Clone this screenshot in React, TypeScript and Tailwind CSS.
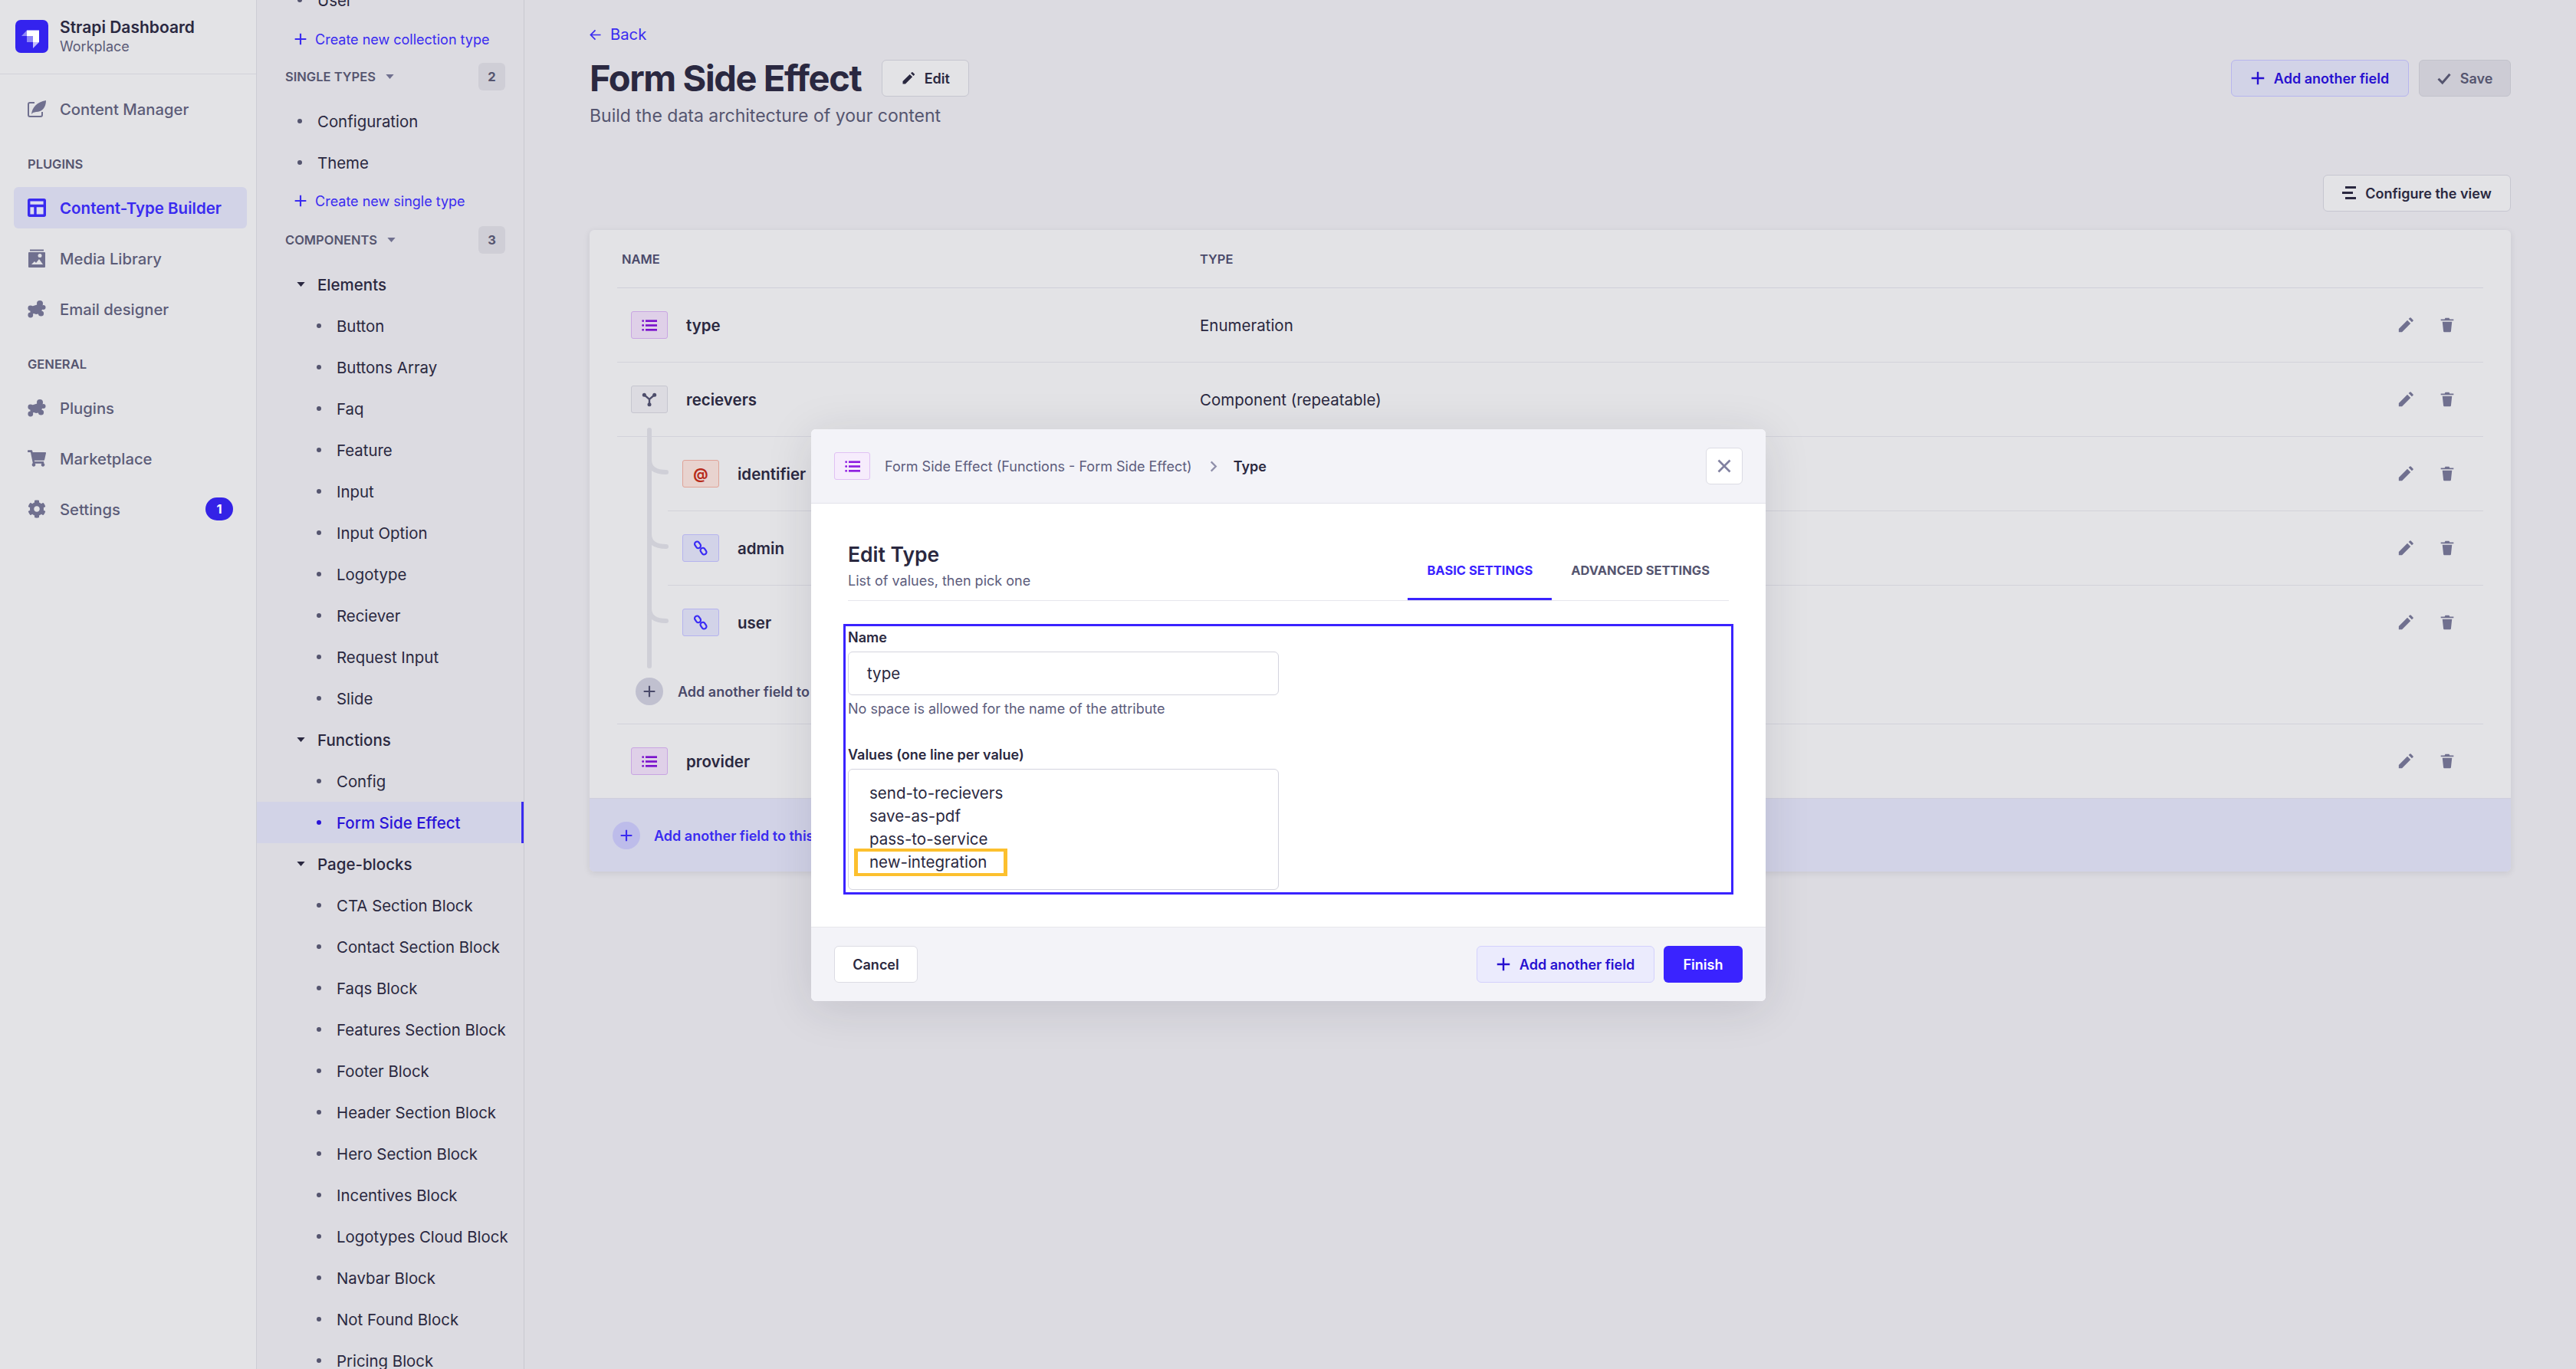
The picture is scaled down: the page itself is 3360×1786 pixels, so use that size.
import { FaCog, FaShoppingCart } from 'react-icons/fa';

function Plus({ className }: { className: string }) {
  return (
    <svg viewBox="0 0 24 24" className={className} fill="currentColor">
      <path d="M10.4 1h3.2v9.4H23v3.2h-9.4V23h-3.2v-9.4H1v-3.2h9.4z" />
    </svg>
  );
}

function Pencil({ className }: { className: string }) {
  return (
    <svg viewBox="0 0 24 24" className={className} fill="currentColor">
      <path d="M2 22v-4.6L14.2 5.2l4.6 4.6L6.6 22zM16 3.4l1.8-1.8a1 1 0 0 1 1.4 0l3.2 3.2a1 1 0 0 1 0 1.4L20.6 8z" />
    </svg>
  );
}

function Trash({ className }: { className: string }) {
  return (
    <svg viewBox="0 0 24 24" className={className} fill="currentColor">
      <path d="M9 1h6l1 2h6v2H2V3h6zM4.5 7h15l-1.600 15a1 1 0 0 1-1 1H7.100a1 1 0 0 1-1-1z" />
    </svg>
  );
}

function ListIcon({ className }: { className: string }) {
  return (
    <svg viewBox="0 0 24 20" className={className} fill="currentColor">
      <circle cx="2" cy="3" r="1.7" />
      <circle cx="2" cy="10" r="1.7" />
      <circle cx="2" cy="17" r="1.7" />
      <rect x="6" y="1.4" width="18" height="3.2" />
      <rect x="6" y="8.4" width="18" height="3.2" />
      <rect x="6" y="15.4" width="18" height="3.2" />
    </svg>
  );
}

function LinkIcon() {
  return (
    <svg viewBox="0 0 24 24" className="h-[20px] w-[20px] text-[#3a2bf5]" fill="none" stroke="currentColor" strokeWidth="2.6">
      <rect x="3.5" y="1.5" width="7.5" height="11" rx="3.7" transform="rotate(-35 7.2 7)" />
      <rect x="12.5" y="11.5" width="7.5" height="11" rx="3.7" transform="rotate(-35 16.2 17)" />
    </svg>
  );
}

function ComponentIcon() {
  return (
    <svg viewBox="0 0 24 24" className="h-[20px] w-[20px] text-[#4d4d6b]" fill="none" stroke="currentColor" strokeWidth="2.8">
      <path d="M4 5l8 7 8-7M12 12v8" />
      <circle cx="4" cy="5" r="3" fill="currentColor" stroke="none" />
      <circle cx="20" cy="5" r="3" fill="currentColor" stroke="none" />
      <circle cx="12" cy="20" r="3" fill="currentColor" stroke="none" />
    </svg>
  );
}

function Puzzle() {
  return (
    <svg viewBox="0 0 24 24" className="h-[24px] w-[24px]" fill="currentColor">
      <circle cx="16" cy="5" r="4" />
      <circle cx="3.800" cy="11" r="3.400" />
      <circle cx="3.800" cy="20" r="3.400" />
      <circle cx="17.500" cy="18" r="3.600" />
      <circle cx="20.500" cy="10" r="3" />
      <path d="M6 8.500L14 6l6 4-3 8-6 1-3-1-4 2-1-9z" />
    </svg>
  );
}

function Caret({ className }: { className: string }) {
  return (
    <svg viewBox="0 0 12 7" className={className} fill="currentColor">
      <path d="M0 0h12L6 7z" />
    </svg>
  );
}

function NavItem({ label, icon, active, badge }: { label: string; icon: React.ReactNode; active?: boolean; badge?: string }) {
  return (
    <div
      className={
        active
          ? 'flex h-[54px] items-center gap-[18px] rounded-[6px] bg-[#d2d3e7] pl-[18px] text-[20.5px] font-semibold text-[#3a2bf0]'
          : 'flex h-[54px] items-center gap-[18px] rounded-[6px] pl-[18px] text-[20.25px] font-medium text-[#5c5c78]'
      }
    >
      <span className="flex h-[24px] w-[24px] items-center justify-center text-[#70708f]">{icon}</span>
      <span className="pt-[2px]">{label}</span>
      {badge && (
        <span className="ml-auto mr-[18px] flex h-[30px] w-[36px] items-center justify-center rounded-full bg-[#3422e6] text-[16.5px] font-bold text-white">
          {badge}
        </span>
      )}
    </div>
  );
}

function SectionLabel({ children }: { children: string }) {
  return <div className="mb-[21px] mt-[36px] h-[18px] pl-[18px] text-[16.5px] font-semibold leading-[18px] text-[#55556f]">{children}</div>;
}

function Sidebar() {
  return (
    <aside className="h-full w-[335px] shrink-0 border-r border-[#cdcdd5] bg-[#e3e3e6]">
      <div className="flex h-[97px] items-center gap-[15px] border-b border-[#d2d2d9] pb-[2px] pl-[20px]">
        <svg viewBox="0 0 43 43" className="h-[43px] w-[43px]">
          <rect width="43" height="43" rx="7" fill="#3423ee" />
          <path d="M15 13.5h16V29h-8v-8h-8z" fill="#fff" />
          <path d="M15 13.5V21H8z" fill="#fff" fillOpacity="0.45" />
          <path d="M15 21h8v8h-8z" fill="#fff" fillOpacity="0.45" />
          <path d="M23 29h8l-8 8z" fill="#fff" fillOpacity="0.7" />
        </svg>
        <div>
          <div className="text-[21px] font-semibold leading-[27px] text-[#2a2840]">Strapi Dashboard</div>
          <div className="text-[18px] leading-[24px] text-[#5c5c78]">Workplace</div>
        </div>
      </div>
      <nav className="pl-[18px] pr-[12px] pt-[18px]">
        <NavItem
          label="Content Manager"
          icon={
            <svg viewBox="0 0 24 24" className="h-[24px] w-[24px]" fill="none" stroke="currentColor" strokeWidth="2">
              <path d="M9 4H3a2 2 0 0 0-2 2v14a2 2 0 0 0 2 2h14a2 2 0 0 0 2-2v-4" />
              <path d="M5 19c1-9 7-16 19-18 0 9-5 15-13 15l-4 1z" fill="currentColor" stroke="none" />
            </svg>
          }
        />
        <SectionLabel>PLUGINS</SectionLabel>
        <div className="flex flex-col gap-[12px]">
          <NavItem
            active
            label="Content-Type Builder"
            icon={
              <svg viewBox="0 0 24 24" className="h-[24px] w-[24px] text-[#3a2bf0]" fill="#dcdcf0" stroke="currentColor" strokeWidth="3.400">
                <rect x="1.700" y="1.700" width="20.600" height="20.600" rx="1" />
                <path d="M1.700 9.500h20.600M10 9.500v12.800" />
              </svg>
            }
          />
          <NavItem
            label="Media Library"
            icon={
              <svg viewBox="0 0 24 24" className="h-[24px] w-[24px]" fill="currentColor">
                <rect x="3" y="0.500" width="18" height="2" />
                <path d="M2 4h20a1 1 0 0 1 1 1v18a1 1 0 0 1-1 1H2a1 1 0 0 1-1-1V5a1 1 0 0 1 1-1zm3 16h15l-5-7-4 5-2-2zm11-9a2.500 2.500 0 1 0 0-5 2.500 2.500 0 0 0 0 5z" fillRule="evenodd" />
              </svg>
            }
          />
          <NavItem label="Email designer" icon={<Puzzle />} />
        </div>
        <SectionLabel>GENERAL</SectionLabel>
        <div className="flex flex-col gap-[12px]">
          <NavItem label="Plugins" icon={<Puzzle />} />
          <NavItem label="Marketplace" icon={<FaShoppingCart className="h-[24px] w-[24px]" />} />
          <NavItem label="Settings" badge="1" icon={<FaCog className="h-[24px] w-[24px]" />} />
        </div>
      </nav>
    </aside>
  );
}

function Leaf({ label, nested, active }: { label: string; nested?: boolean; active?: boolean }) {
  return (
    <div
      className={
        (nested ? 'pl-[78px] ' : 'pl-[53px] ') +
        (active
          ? 'relative flex h-[54px] items-center gap-[20px] bg-[#d2d3e7] text-[20.5px] font-medium text-[#2a14d8]'
          : 'flex h-[54px] items-center gap-[20px] text-[20.4px] text-[#2a2840]')
      }
    >
      <span className={active ? 'h-[6px] w-[6px] rounded-full bg-[#2a14d8]' : 'h-[6px] w-[6px] rounded-full bg-[#55556f]'} />
      <span className="whitespace-nowrap pt-[2px]">{label}</span>
      {active && <span className="absolute right-0 top-0 h-full w-[3px] bg-[#3a2bf0]" />}
    </div>
  );
}

function Group({ label }: { label: string }) {
  return (
    <div className="flex h-[54px] items-center gap-[16px] pl-[52px] text-[20.5px] font-medium text-[#2a2840]">
      <Caret className="h-[6px] w-[11px] text-[#2a2840]" />
      <span className="pt-[2px]">{label}</span>
    </div>
  );
}

function CreateLink({ label, className }: { label: string; className: string }) {
  return (
    <div className={'flex items-center gap-[11px] pl-[49px] text-[18px] text-[#3a2bf0] ' + className}>
      <Plus className="h-[16px] w-[16px]" />
      <span>{label}</span>
    </div>
  );
}

function ListHeader({ label, count, className }: { label: string; count: string; className: string }) {
  return (
    <div className={'flex items-center pl-[37px] pr-[24px] ' + className}>
      <span className="text-[16.5px] font-semibold text-[#55556f]">{label}</span>
      <Caret className="ml-[13px] h-[6px] w-[11px] text-[#70708f]" />
      <span className="ml-auto flex h-[36px] w-[35px] items-center justify-center rounded-[6px] bg-[#cfced6] text-[16.5px] font-bold text-[#55556f]">{count}</span>
    </div>
  );
}

function SecondaryNav() {
  const elements = ['Button', 'Buttons Array', 'Faq', 'Feature', 'Input', 'Input Option', 'Logotype', 'Reciever', 'Request Input', 'Slide'];
  const blocks = [
    'CTA Section Block',
    'Contact Section Block',
    'Faqs Block',
    'Features Section Block',
    'Footer Block',
    'Header Section Block',
    'Hero Section Block',
    'Incentives Block',
    'Logotypes Cloud Block',
    'Navbar Block',
    'Not Found Block',
    'Pricing Block',
  ];
  return (
    <div className="h-full w-[349px] shrink-0 overflow-hidden border-r border-[#c8c8d0] bg-[#dcdbe1]">
      <div className="-mt-[27px]">
        <Leaf label="User" />
        <CreateLink label="Create new collection type" className="h-[48px]" />
        <ListHeader label="SINGLE TYPES" count="2" className="mb-[6px] h-[50px]" />
        <Leaf label="Configuration" />
        <Leaf label="Theme" />
        <CreateLink label="Create new single type" className="h-[46px]" />
        <ListHeader label="COMPONENTS" count="3" className="mb-[3px] h-[56px]" />
        <Group label="Elements" />
        {elements.map((item) => (
          <Leaf key={item} label={item} nested />
        ))}
        <Group label="Functions" />
        <Leaf label="Config" nested />
        <Leaf label="Form Side Effect" nested active />
        <Group label="Page-blocks" />
        {blocks.map((item) => (
          <Leaf key={item} label={item} nested />
        ))}
      </div>
    </div>
  );
}

const boxStyles = {
  list: 'border-[#c9a5e2] bg-[#dfd0e8] text-[#7b12cc]',
  component: 'border-[#c6c6cf] bg-[#dcdbe1]',
  email: 'border-[#dfa398] bg-[#e8d3cf] text-[#b72b1a]',
  relation: 'border-[#b5b3ee] bg-[#d2d3e8]',
};

function TypeBox({ kind }: { kind: keyof typeof boxStyles }) {
  return (
    <span className={'flex h-[36px] w-[48px] shrink-0 items-center justify-center rounded-[3px] border ' + boxStyles[kind]}>
      {kind === 'list' && <ListIcon className="h-[17px] w-[20px]" />}
      {kind === 'component' && <ComponentIcon />}
      {kind === 'email' && <span className="text-[19px] font-bold leading-none">@</span>}
      {kind === 'relation' && <LinkIcon />}
    </span>
  );
}

function FieldRow({ name, type, kind, nested, noBorder }: { name: string; type?: string; kind: keyof typeof boxStyles; nested?: boolean; noBorder?: boolean }) {
  return (
    <div className={(nested ? 'ml-[66px] ' : '') + (noBorder ? 'h-[96px] ' : 'h-[97px] border-b border-[#d2d2da] ') + 'flex items-center'}>
      <div className={nested ? 'flex w-[694px] items-center gap-[24px] pl-[19px]' : 'flex w-[760px] items-center gap-[24px] pl-[18px]'}>
        <TypeBox kind={kind} />
        <span className="pt-[2px] text-[20.5px] font-semibold text-[#2a2840]">{name}</span>
      </div>
      <span className="pt-[2px] text-[20.5px] text-[#2a2840]">{type}</span>
      <div className="ml-auto flex items-center gap-[33px] pr-[37px] text-[#70708f]">
        <Pencil className="h-[22px] w-[22px]" />
        <Trash className="h-[20px] w-[20px]" />
      </div>
    </div>
  );
}

function FieldTable() {
  return (
    <div className="mt-[24px] h-[837px] overflow-hidden rounded-[6px] bg-[#e3e3e6] shadow-[0_2px_8px_rgba(33,33,52,0.1)]">
      <div className="px-[36px]">
        <div className="flex h-[76px] items-center border-b border-[#cfcfd9] pl-[6px] pt-[2px] text-[16.5px] font-semibold text-[#4a4a6a]">
          <span className="w-[754px]">NAME</span>
          <span>TYPE</span>
        </div>
        <FieldRow name="type" type="Enumeration" kind="list" />
        <FieldRow name="recievers" type="Component (repeatable)" kind="component" />
        <div className="relative border-b border-[#d2d2da]">
          <svg className="absolute -top-[14px] left-[36px] h-[320px] w-[36px] text-[#cfcfd7]" viewBox="0 0 36 320" fill="none" stroke="currentColor" strokeWidth="6" strokeLinecap="round">
            <path d="M6 5v308" />
            <path d="M6 44q0 16 22 16M6 141q0 16 22 16M6 238q0 16 22 16" />
          </svg>
          <FieldRow name="identifier" kind="email" nested />
          <FieldRow name="admin" kind="relation" nested />
          <FieldRow name="user" kind="relation" nested noBorder />
          <div className="flex h-[84px] items-center gap-[19px] pl-[24px] text-[18px] font-semibold text-[#4a4a6a]">
            <span className="flex h-[36px] w-[36px] items-center justify-center rounded-full bg-[#c0c0cf]">
              <Plus className="h-[16px] w-[16px]" />
            </span>
            <span>Add another field to this component</span>
          </div>
        </div>
        <FieldRow name="provider" kind="list" noBorder />
      </div>
      <div className="flex h-[97px] items-center gap-[18px] border-t border-[#cfcfdc] bg-[#d2d3e7] pl-[30px] text-[18px] font-semibold text-[#3a2bf0]">
        <span className="flex h-[36px] w-[36px] items-center justify-center rounded-full bg-[#bdbcea]">
          <Plus className="h-[16px] w-[16px]" />
        </span>
        <span>Add another field to this collection type</span>
      </div>
    </div>
  );
}

function EditModal() {
  return (
    <div className="absolute left-[1058px] top-[560px] w-[1245px] overflow-hidden rounded-[6px] bg-white shadow-[0_8px_60px_rgba(33,33,52,0.13)]">
      <div className="flex h-[97px] items-center border-b border-[#e3e3ea] bg-[#f3f3f8] pl-[30px] pr-[30px]">
        <span className="flex h-[36px] w-[47px] items-center justify-center rounded-[3px] border border-[#e0c1f4] bg-[#f6ecfc] text-[#8f1fe0]">
          <ListIcon className="h-[17px] w-[20px]" />
        </span>
        <span className="ml-[19px] text-[18px] text-[#5c5c7c]">Form Side Effect (Functions - Form Side Effect)</span>
        <svg viewBox="0 0 10 16" className="ml-[23px] h-[15px] w-[10px] text-[#8e8ea9]" fill="none" stroke="currentColor" strokeWidth="2.4">
          <path d="M1.500 1.500L8 8l-6.500 6.500" />
        </svg>
        <span className="ml-[21px] text-[18px] font-semibold text-[#2a2840]">Type</span>
        <span className="ml-auto flex h-[48px] w-[48px] items-center justify-center rounded-[6px] border border-[#dcdce4] bg-white text-[#8080a0]">
          <svg viewBox="0 0 24 24" className="h-[20px] w-[20px]" fill="none" stroke="currentColor" strokeWidth="3.200">
            <path d="M3 3l18 18M21 3L3 21" />
          </svg>
        </span>
      </div>

      <div className="mx-[48px] flex h-[127px] items-end justify-between border-b border-[#e6e6ec]">
        <div className="self-start pt-[48px]">
          <div className="text-[26.5px] font-semibold leading-[36px] text-[#2a2840]">Edit Type</div>
          <div className="mt-[3px] text-[18px] leading-[27px] text-[#5c5c7c]">List of values, then pick one</div>
        </div>
        <div className="flex text-[16.5px] font-bold leading-[24px]">
          <span className="border-b-[3px] border-[#3a23ff] px-[25px] pb-[24px] text-[#3a23ff]">BASIC SETTINGS</span>
          <span className="px-[25px] pb-[27px] text-[#55556f]">ADVANCED SETTINGS</span>
        </div>
      </div>

      <div className="mx-[42px] mb-[42px] mt-[30px] border-[3px] border-[#3a23ff] px-[3px] pb-[3px] pt-[4px]">
        <div className="text-[18px] font-semibold leading-[22px] text-[#2a2840]">Name</div>
        <div className="mt-[7px] flex h-[57px] w-[562px] items-center rounded-[6px] border border-[#d4d4de] pl-[24px] pt-[2px] text-[20.5px] text-[#2a2840]">type</div>
        <div className="mt-[6px] text-[18px] leading-[24px] text-[#5c5c7c]">No space is allowed for the name of the attribute</div>
        <div className="mt-[37px] text-[18px] font-semibold leading-[22px] text-[#2a2840]">Values (one line per value)</div>
        <div className="relative mt-[7px] h-[158px] w-[562px] rounded-[6px] border border-[#d4d4de] pl-[27px] pt-[16px] text-[20.5px] leading-[30px] text-[#2a2840]">
          <div>send-to-recievers</div>
          <div>save-as-pdf</div>
          <div>pass-to-service</div>
          <div>new-integration</div>
          <span className="absolute left-[7px] top-[103px] h-[36px] w-[200px] border-x-[5px] border-y-[4px] border-[#fcc02e]" />
        </div>
      </div>

      <div className="flex h-[97px] items-center justify-between border-t border-[#e6e6ec] bg-[#f3f3f8] px-[30px] text-[18px] font-semibold">
        <span className="flex h-[48px] w-[109px] items-center justify-center rounded-[6px] border border-[#dcdce4] bg-white text-[#2a2840]">Cancel</span>
        <div className="flex gap-[12px]">
          <span className="flex h-[48px] w-[232px] items-center justify-center gap-[12px] rounded-[6px] border border-[#d3d1fd] bg-[#ebebfd] text-[#2710d0]">
            <Plus className="h-[18px] w-[18px]" />
            Add another field
          </span>
          <span className="flex h-[48px] w-[103px] items-center justify-center rounded-[6px] bg-[#3a23ff] text-white">Finish</span>
        </div>
      </div>
    </div>
  );
}

export default function App() {
  return (
    <div className="relative flex h-[1786px] w-[3360px] overflow-hidden [font-family:Inter,sans-serif]">
      <Sidebar />
      <SecondaryNav />
      <main className="min-w-0 flex-1 bg-[#dcdbe1] px-[85px] pt-[32px]">
        <div className="flex h-[27px] items-center gap-[12px] text-[20.25px] text-[#3a2bf0]">
          <svg viewBox="0 0 16 16" className="h-[15px] w-[15px]" fill="none" stroke="currentColor" strokeWidth="1.800">
            <path d="M8 1.500L1.500 8 8 14.500M1.500 8H15.500" />
          </svg>
          Back
        </div>
        <div className="mt-[19px] flex items-center">
          <h1 className="text-[47px] font-bold leading-[48px] tracking-[-1.4px] text-[#2a2840]">Form Side Effect</h1>
          <span className="ml-[27px] flex h-[48px] w-[114px] items-center justify-center gap-[12px] rounded-[6px] border border-[#c6c6d0] bg-[#e3e3e6] text-[18px] font-semibold text-[#2a2840]">
            <Pencil className="h-[18px] w-[18px]" />
            Edit
          </span>
          <span className="ml-auto flex h-[48px] w-[232px] items-center justify-center gap-[12px] rounded-[6px] border border-[#b7b5ee] bg-[#d2d3e7] text-[18px] font-semibold text-[#2710d0]">
            <Plus className="h-[18px] w-[18px]" />
            Add another field
          </span>
          <span className="ml-[13px] flex h-[48px] w-[120px] items-center justify-center gap-[12px] rounded-[6px] border border-[#c2c2cb] bg-[#cdccd5] text-[18px] font-semibold text-[#55556f]">
            <svg viewBox="0 0 24 24" className="h-[18px] w-[18px]" fill="none" stroke="currentColor" strokeWidth="4">
              <path d="M2 13l7 7L22 5" />
            </svg>
            Save
          </span>
        </div>
        <p className="mt-[10px] text-[23px] leading-[30px] text-[#55556f]">Build the data architecture of your content</p>
        <div className="mt-[62px] flex justify-end">
          <span className="flex h-[48px] w-[245px] items-center justify-center gap-[12px] rounded-[6px] border border-[#c6c6d0] bg-[#e3e3e6] text-[18px] font-semibold text-[#2a2840]">
            <svg viewBox="0 0 18 18" className="h-[18px] w-[18px]" fill="currentColor">
              <path d="M4 0h14v3H4zM0 7h14v3H0zM4 14h14v3H4z" />
            </svg>
            Configure the view
          </span>
        </div>
        <FieldTable />
      </main>
      <EditModal />
    </div>
  );
}
